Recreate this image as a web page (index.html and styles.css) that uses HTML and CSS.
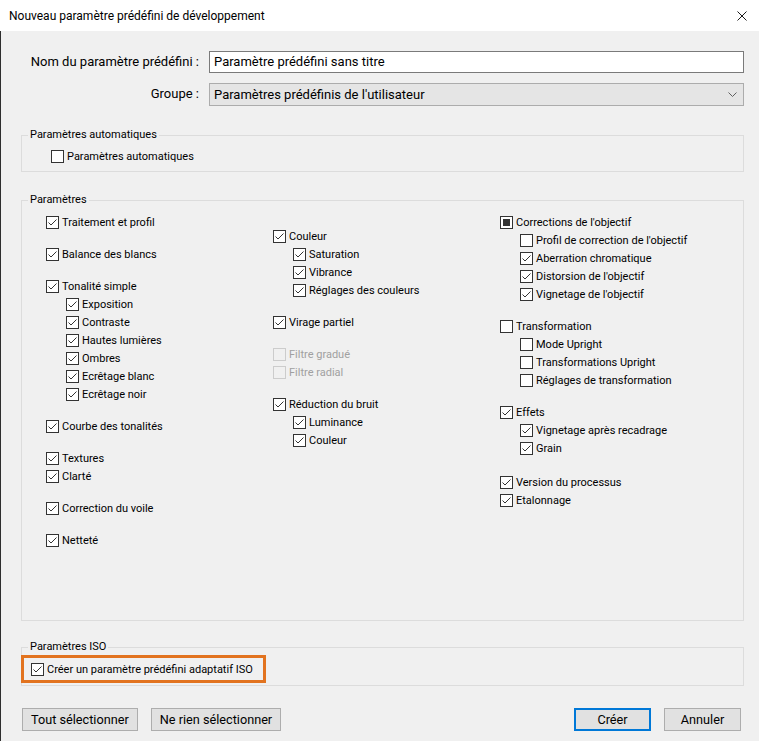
FILE: index.html
```html
<!DOCTYPE html>
<html lang="fr">
<head>
    <meta charset="UTF-8">
    <title>Nouveau paramètre prédéfini de développement</title>
    <link rel="stylesheet" href="styles.css">
</head>
<body>
    <div class="titlebar">
        <span class="title">Nouveau paramètre prédéfini de développement</span>
        <svg class="close" viewBox="0 0 10 10" width="10" height="10">
            <path d="M0.5 0.5 L9.5 9.5 M9.5 0.5 L0.5 9.5" stroke="#1a1a1a" stroke-width="1" fill="none"/>
        </svg>
    </div>

    <div class="dialog">
        <div class="form-grid">
            <label class="form-label">Nom du paramètre prédéfini :</label>
            <div class="text-input">Paramètre prédéfini sans titre</div>
            <label class="form-label">Groupe :</label>
            <div class="select">
                <span>Paramètres prédéfinis de l'utilisateur</span>
                <svg class="chevron" viewBox="0 0 9 5" width="9" height="5">
                    <path d="M0.5 0.5 L4.5 4.5 L8.5 0.5" stroke="#606060" stroke-width="1" fill="none"/>
                </svg>
            </div>
        </div>

        <fieldset class="group-box auto-box">
            <legend>Paramètres automatiques</legend>
            <div class="auto-content">
                <div class="cb"><span class="box"></span>Paramètres automatiques</div>
            </div>
        </fieldset>

        <fieldset class="group-box params-box">
            <legend>Paramètres</legend>
            <div class="columns">
                <!-- colonne 1 -->
                <div class="col">
                    <div class="grp">
                        <div class="cb"><span class="box checked"></span>Traitement et profil</div>
                    </div>
                    <div class="grp">
                        <div class="cb"><span class="box checked"></span>Balance des blancs</div>
                    </div>
                    <div class="grp">
                        <div class="cb"><span class="box checked"></span>Tonalité simple</div>
                        <div class="cb sub"><span class="box checked"></span>Exposition</div>
                        <div class="cb sub"><span class="box checked"></span>Contraste</div>
                        <div class="cb sub"><span class="box checked"></span>Hautes lumières</div>
                        <div class="cb sub"><span class="box checked"></span>Ombres</div>
                        <div class="cb sub"><span class="box checked"></span>Ecrêtage blanc</div>
                        <div class="cb sub"><span class="box checked"></span>Ecrêtage noir</div>
                    </div>
                    <div class="grp">
                        <div class="cb"><span class="box checked"></span>Courbe des tonalités</div>
                    </div>
                    <div class="grp">
                        <div class="cb"><span class="box checked"></span>Textures</div>
                        <div class="cb"><span class="box checked"></span>Clarté</div>
                    </div>
                    <div class="grp">
                        <div class="cb"><span class="box checked"></span>Correction du voile</div>
                    </div>
                    <div class="grp">
                        <div class="cb"><span class="box checked"></span>Netteté</div>
                    </div>
                </div>

                <!-- colonne 2 -->
                <div class="col col-offset">
                    <div class="grp">
                        <div class="cb"><span class="box checked"></span>Couleur</div>
                        <div class="cb sub"><span class="box checked"></span>Saturation</div>
                        <div class="cb sub"><span class="box checked"></span>Vibrance</div>
                        <div class="cb sub"><span class="box checked"></span>Réglages des couleurs</div>
                    </div>
                    <div class="grp">
                        <div class="cb"><span class="box checked"></span>Virage partiel</div>
                    </div>
                    <div class="grp">
                        <div class="cb disabled"><span class="box"></span>Filtre gradué</div>
                        <div class="cb disabled"><span class="box"></span>Filtre radial</div>
                    </div>
                    <div class="grp">
                        <div class="cb"><span class="box checked"></span>Réduction du bruit</div>
                        <div class="cb sub"><span class="box checked"></span>Luminance</div>
                        <div class="cb sub"><span class="box checked"></span>Couleur</div>
                    </div>
                </div>

                <!-- colonne 3 -->
                <div class="col">
                    <div class="grp">
                        <div class="cb"><span class="box mixed"></span>Corrections de l'objectif</div>
                        <div class="cb sub"><span class="box"></span>Profil de correction de l'objectif</div>
                        <div class="cb sub"><span class="box checked"></span>Aberration chromatique</div>
                        <div class="cb sub"><span class="box checked"></span>Distorsion de l'objectif</div>
                        <div class="cb sub"><span class="box checked"></span>Vignetage de l'objectif</div>
                    </div>
                    <div class="grp">
                        <div class="cb"><span class="box"></span>Transformation</div>
                        <div class="cb sub"><span class="box"></span>Mode Upright</div>
                        <div class="cb sub"><span class="box"></span>Transformations Upright</div>
                        <div class="cb sub"><span class="box"></span>Réglages de transformation</div>
                    </div>
                    <div class="grp grp-wide">
                        <div class="cb"><span class="box checked"></span>Effets</div>
                        <div class="cb sub"><span class="box checked"></span>Vignetage après recadrage</div>
                        <div class="cb sub"><span class="box checked"></span>Grain</div>
                    </div>
                    <div class="grp">
                        <div class="cb"><span class="box checked"></span>Version du processus</div>
                        <div class="cb"><span class="box checked"></span>Etalonnage</div>
                    </div>
                </div>
            </div>
        </fieldset>

        <fieldset class="group-box iso-box">
            <legend>Paramètres ISO</legend>
            <div class="highlight">
                <div class="cb"><span class="box checked"></span>Créer un paramètre prédéfini adaptatif ISO</div>
            </div>
        </fieldset>

        <div class="buttons">
            <button class="btn">Tout sélectionner</button>
            <button class="btn">Ne rien sélectionner</button>
            <span class="spacer"></span>
            <button class="btn btn-default">Créer</button>
            <button class="btn">Annuler</button>
        </div>
    </div>
</body>
</html>
```

FILE: styles.css
```css
* {
    margin: 0;
    padding: 0;
    box-sizing: border-box;
}

html, body {
    width: 759px;
    height: 741px;
    overflow: hidden;
}

body {
    font-family: Roboto, "Noto Sans", sans-serif;
    font-size: 11px;
    color: #000;
    background: #f0f0f0;
    display: flex;
    flex-direction: column;
}

.titlebar {
    height: 31px;
    background: #fff;
    display: flex;
    align-items: center;
    justify-content: space-between;
    padding: 0 9px 0 9px;
    flex-shrink: 0;
}

.title {
    font-size: 12px;
    color: #000;
}

.close {
    margin-right: 3px;
}

.dialog {
    flex: 1;
    display: flex;
    flex-direction: column;
    box-shadow: inset 1px 0 0 #2e2e2e;
}

/* top fields */
.form-grid {
    display: grid;
    grid-template-columns: 199px 1fr;
    column-gap: 10px;
    row-gap: 10px;
    padding: 20px 15px 0 0;
    font-size: 13px;
}

.form-label {
    text-align: right;
    line-height: 22px;
    color: #000;
}

.text-input {
    height: 22px;
    background: #fff;
    border: 1px solid #7a7a7a;
    padding: 0 4px;
    line-height: 20px;
    white-space: nowrap;
}

.select {
    height: 23px;
    background: #e5e5e5;
    border: 1px solid #acacac;
    padding: 0 6px 0 4px;
    line-height: 21px;
    display: flex;
    align-items: center;
    justify-content: space-between;
}

/* group boxes */
.group-box {
    border: 1px solid #dcdcdc;
    margin: 0 15px 0 21px;
    padding: 0;
    min-width: 0;
}

.group-box legend {
    margin-left: 6px;
    padding: 0 2px;
    line-height: 16px;
    font-size: 11px;
}

.auto-box {
    margin-top: 21px;
}

.auto-content {
    padding: 4px 0 6px 29px;
}

.params-box {
    margin-top: 20px;
    flex: 1;
}

.columns {
    display: grid;
    grid-template-columns: 227px 227px 1fr;
    padding: 5px 0 0 24px;
}

.col-offset {
    padding-top: 14px;
}

.grp {
    margin-bottom: 14px;
}

.grp-wide {
    margin-bottom: 16px;
}

/* checkboxes */
.cb {
    height: 18px;
    display: flex;
    align-items: center;
    white-space: nowrap;
}

.cb.sub {
    padding-left: 20px;
}

.box {
    width: 13px;
    height: 13px;
    border: 1px solid #333;
    background: #fff;
    margin-right: 3px;
    flex-shrink: 0;
    position: relative;
}

.box.checked {
    background: #fff url("data:image/svg+xml;utf8,<svg xmlns='http://www.w3.org/2000/svg' width='11' height='11' viewBox='0 0 11 11'><path d='M1.5 5.5 L4 8 L9.5 2.5' stroke='%23333' stroke-width='1' fill='none'/></svg>") no-repeat center;
}

.box.mixed::after {
    content: "";
    position: absolute;
    left: 2px;
    top: 2px;
    width: 7px;
    height: 7px;
    background: #333;
}

.cb.disabled {
    color: #a0a0a0;
}

.cb.disabled .box {
    border-color: #cccccc;
    background: #f0f0f0;
}

/* ISO */
.iso-box {
    margin-top: 18px;
    padding: 0 0 2px 0;
}

.highlight {
    width: 245px;
    height: 28px;
    margin-left: -1px;
    border: 3px solid #e2731f;
    padding-left: 7px;
    display: flex;
    align-items: center;
}

/* buttons */
.buttons {
    display: flex;
    gap: 13px;
    margin: 22px 18px 10px 22px;
    flex-shrink: 0;
}

.spacer {
    flex: 1;
}

.btn {
    font-family: inherit;
    font-size: 12.7px;
    height: 23px;
    padding: 0 8px;
    background: #e1e1e1;
    border: 1px solid #adadad;
    color: #000;
    min-width: 77px;
}

.btn-default {
    border: 2px solid #0078d7;
}
```
